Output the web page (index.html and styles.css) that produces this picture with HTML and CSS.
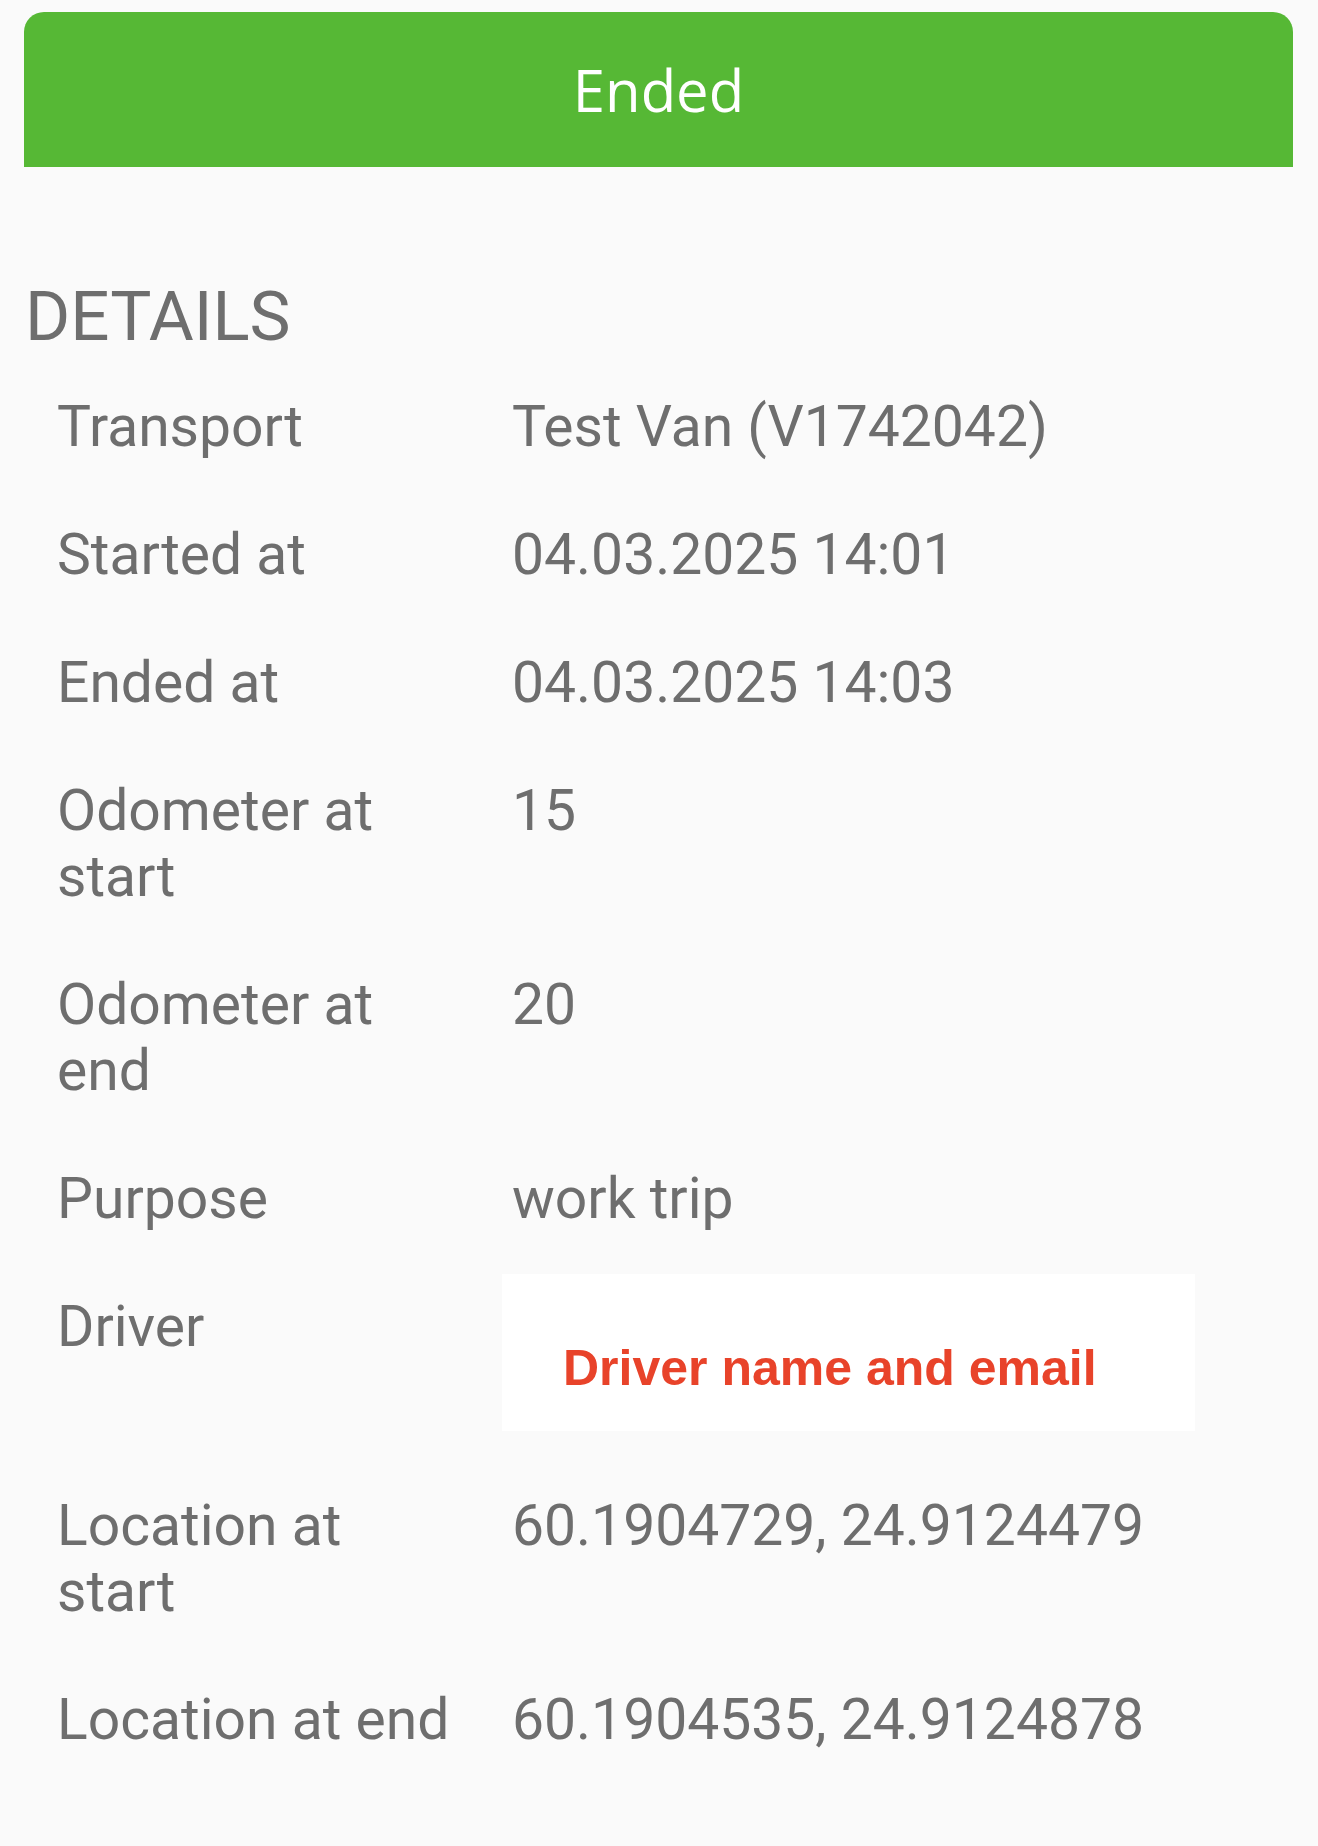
FILE: index.html
```html
<!DOCTYPE html>
<html lang="en">
<head>
    <meta charset="UTF-8">
    <meta name="viewport" content="width=device-width, initial-scale=1.0">
    <title>Trip details</title>
    <link rel="stylesheet" href="styles.css">
</head>
<body>
    <div class="status">Ended</div>

    <h2 class="title">DETAILS</h2>
    <div class="details">
        <div class="row">
            <div class="label">Transport</div>
            <div class="value">Test Van (V1742042)</div>
        </div>
        <div class="row">
            <div class="label">Started at</div>
            <div class="value">04.03.2025 14:01</div>
        </div>
        <div class="row">
            <div class="label">Ended at</div>
            <div class="value">04.03.2025 14:03</div>
        </div>
        <div class="row">
            <div class="label">Odometer at start</div>
            <div class="value">15</div>
        </div>
        <div class="row">
            <div class="label">Odometer at end</div>
            <div class="value">20</div>
        </div>
        <div class="row">
            <div class="label">Purpose</div>
            <div class="value">work trip</div>
        </div>
        <div class="row">
            <div class="label">Driver</div>
            <div class="redact">Driver name and email</div>
        </div>
        <div class="row">
            <div class="label">Location at start</div>
            <div class="value">60.1904729, 24.9124479</div>
        </div>
        <div class="row">
            <div class="label">Location at end</div>
            <div class="value">60.1904535, 24.9124878</div>
        </div>
    </div>
</body>
</html>
```

FILE: styles.css
```css
*{
    margin:0px;
    padding:0px;
    box-sizing:border-box;
}
body{
    background-color:#fafafa;
    font-family:Roboto, "Liberation Sans", sans-serif;
    color:#6e6e6e;
}
.status{
    margin:12px 25px 0 24px;
    height:155px;
    border-radius:20px 20px 0 0;
    background-color:#56b835;
    color:#ffffff;
    font-family:"Open Sans", sans-serif;
    font-size:58px;
    display:flex;
    align-items:center;
    justify-content:center;
}
.title{
    margin-top:115px;
    padding-left:25px;
    font-size:69px;
    line-height:69px;
    font-weight:400;
    color:#6e6e6e;
}
.details{
    margin-top:12px;
}
.row{
    display:grid;
    grid-template-columns:400px 1fr;
    column-gap:55px;
    padding:31px 0;
    padding-left:57px;
    font-size:57px;
    line-height:66px;
}
.redact{
    background-color:#ffffff;
    width:693px;
    height:157px;
    margin-left:-10px;
    margin-top:-20px;
    padding:65px 0 0 61px;
    font-family:"Liberation Sans", Arial, sans-serif;
    font-weight:700;
    font-size:50px;
    line-height:normal;
    color:#e8432a;
}
```
